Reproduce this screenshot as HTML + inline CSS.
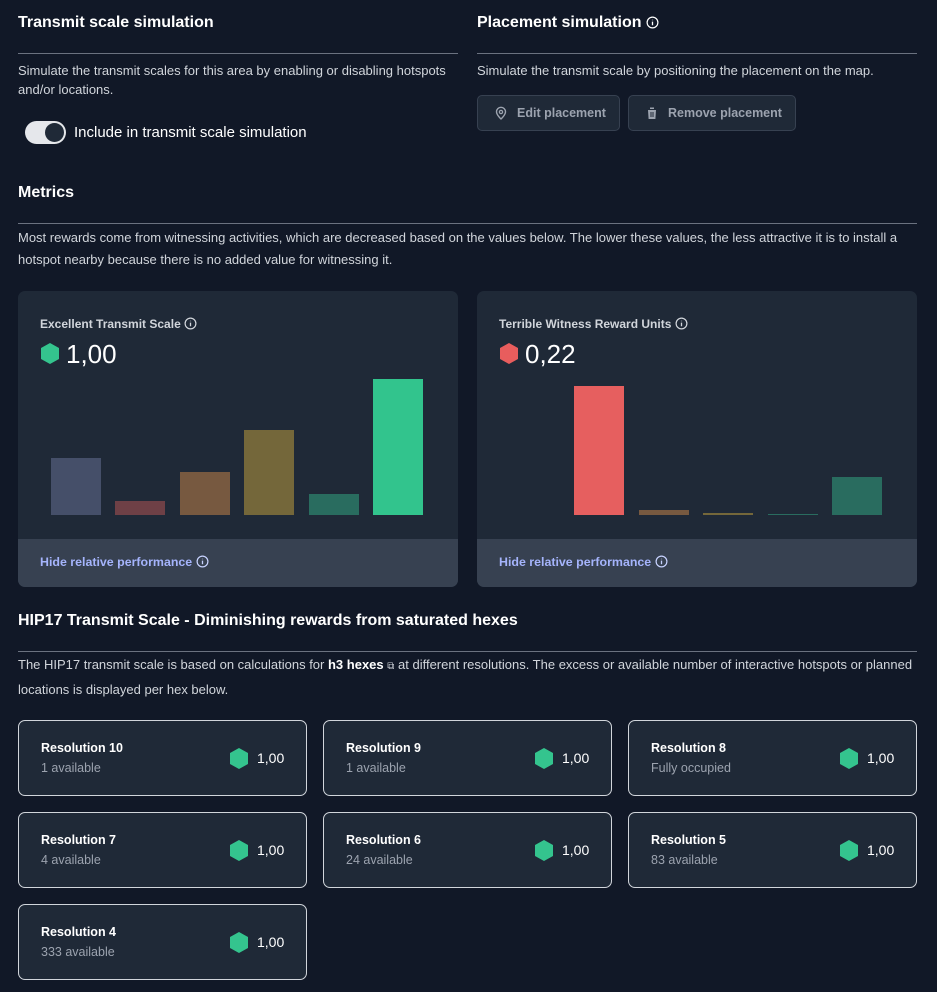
<!DOCTYPE html>
<html><head><meta charset="utf-8"><style>
*{box-sizing:border-box;margin:0;padding:0}
body{width:937px;height:992px;background:#111827;font-family:"Liberation Sans",sans-serif;color:#e5e7eb;position:relative;overflow:hidden}
.a{position:absolute}
h2{position:absolute;font-size:16px;font-weight:bold;color:#fff}
.hr{position:absolute;height:1px;background:#6b7280}
.p{position:absolute;font-size:13px;color:#d1d5db;line-height:19px}
.btn{position:absolute;height:36px;border:1px solid #374151;background:#1f2937;border-radius:5px;color:#9ca3af;font-size:12.5px;font-weight:bold;display:flex;align-items:center;padding-left:16px;gap:9px}
.card{position:absolute;background:#1f2937;border-radius:7px;overflow:hidden;width:440px;height:296px;top:291px}
.card .t{position:absolute;left:22px;top:26px;font-size:12px;font-weight:bold;color:#d1d5db}
.card .v{position:absolute;left:48px;top:48px;font-size:26px;color:#fff}
.card .f{position:absolute;left:0;top:248px;width:100%;height:48px;background:#374151}
.card .f span{position:absolute;left:22px;top:16px;font-size:12.4px;font-weight:bold;color:#a5b4fc}
.bar{position:absolute;width:50px;bottom:72px}
.rc{position:absolute;width:289px;height:76px;border:1px solid #d1d5db;border-radius:7px;background:#1f2937}
.rc b{position:absolute;left:22px;top:20px;font-size:12.5px;color:#fff}
.rc i{position:absolute;left:22px;top:40px;font-size:12.5px;color:#9ca3af;font-style:normal}
.rc svg{position:absolute;left:210px;top:27px}
.rc u{position:absolute;left:238px;top:29px;font-size:14px;text-decoration:none;color:#fff}
</style></head><body>
<h2 style="left:18px;top:14px">Transmit scale simulation</h2>
<div class="hr" style="left:18px;top:53px;width:440px"></div>
<div class="p" style="left:18px;top:61px;width:440px">Simulate the transmit scales for this area by enabling or disabling hotspots and/or locations.</div>
<div class="a" style="left:25px;top:121px;width:41px;height:23px;border-radius:12px;background:#e5e7eb"></div>
<div class="a" style="left:45px;top:123px;width:19px;height:19px;border-radius:50%;background:#1f2937"></div>
<div class="a" style="left:74px;top:124px;font-size:15px;color:#fff">Include in transmit scale simulation</div>

<h2 style="left:477px;top:14px">Placement simulation</h2>
<svg class="a" style="left:646px;top:16px" width="13" height="13" viewBox="0 0 14 14"><circle cx="7" cy="7" r="5.8" fill="none" stroke="#fff" stroke-width="1.3"/><path d="M7 6v4M7 4v.6" stroke="#fff" stroke-width="1.4"/></svg>
<div class="hr" style="left:477px;top:53px;width:440px"></div>
<div class="p" style="left:477px;top:61px">Simulate the transmit scale by positioning the placement on the map.</div>
<div class="btn" style="left:477px;top:95px;width:143px"><svg width="14" height="14" viewBox="0 0 14 14"><path d="M7 13s-4.5-4-4.5-7.2A4.5 4.5 0 0 1 11.5 5.8C11.5 9 7 13 7 13z" fill="none" stroke="#9ca3af" stroke-width="1.4"/><circle cx="7" cy="6" r="1.6" fill="none" stroke="#9ca3af" stroke-width="1.3"/></svg>Edit placement</div>
<div class="btn" style="left:628px;top:95px;width:168px"><svg width="14" height="14" viewBox="0 0 14 14"><path d="M2 3h10M5 3V1.5h4V3M3 4h8l-.6 9H3.6z" fill="#9ca3af"/><path d="M6 6v5M8 6v5" stroke="#1f2937" stroke-width="1"/></svg>Remove placement</div>

<h2 style="left:18px;top:184px">Metrics</h2>
<div class="hr" style="left:18px;top:223px;width:899px"></div>
<div class="p" style="left:18px;top:227px;width:899px;line-height:22px">Most rewards come from witnessing activities, which are decreased based on the values below. The lower these values, the less attractive it is to install a hotspot nearby because there is no added value for witnessing it.</div>

<div class="card" style="left:18px">
<div class="t">Excellent Transmit Scale <svg style="vertical-align:-2px" width="13" height="13" viewBox="0 0 14 14"><circle cx="7" cy="7" r="5.8" fill="none" stroke="#d1d5db" stroke-width="1.3"/><path d="M7 6v4M7 4v.6" stroke="#d1d5db" stroke-width="1.4"/></svg></div>
<svg class="a" style="left:22px;top:52px" width="20" height="22" viewBox="0 0 20 22"><path d="M10 0l9 5v11l-9 5-9-5V5z" fill="#34c48e"/></svg>
<div class="v">1,00</div>
<div class="bar" style="left:33px;height:57px;background:#454f69"></div>
<div class="bar" style="left:97px;height:14px;background:#6e4046"></div>
<div class="bar" style="left:162px;height:43px;background:#775940"></div>
<div class="bar" style="left:226px;height:85px;background:#74673a"></div>
<div class="bar" style="left:291px;height:21px;background:#296c5f"></div>
<div class="bar" style="left:355px;height:136px;background:#32c48d"></div>
<div class="f"><span>Hide relative performance <svg style="vertical-align:-2px" width="13" height="13" viewBox="0 0 14 14"><circle cx="7" cy="7" r="5.8" fill="none" stroke="#c7d2fe" stroke-width="1.3"/><path d="M7 6v4M7 4v.6" stroke="#c7d2fe" stroke-width="1.4"/></svg></span></div>
</div>
<div class="card" style="left:477px">
<div class="t">Terrible Witness Reward Units <svg style="vertical-align:-2px" width="13" height="13" viewBox="0 0 14 14"><circle cx="7" cy="7" r="5.8" fill="none" stroke="#d1d5db" stroke-width="1.3"/><path d="M7 6v4M7 4v.6" stroke="#d1d5db" stroke-width="1.4"/></svg></div>
<svg class="a" style="left:22px;top:52px" width="20" height="22" viewBox="0 0 20 22"><path d="M10 0l9 5v11l-9 5-9-5V5z" fill="#e85d5d"/></svg>
<div class="v">0,22</div>
<div class="bar" style="left:97px;height:129px;background:#e65f5f"></div>
<div class="bar" style="left:162px;height:5px;background:#775940"></div>
<div class="bar" style="left:226px;height:2px;background:#74673a"></div>
<div class="bar" style="left:291px;height:1px;background:#296c5f"></div>
<div class="bar" style="left:355px;height:38px;background:#296c5f"></div>
<div class="f"><span>Hide relative performance <svg style="vertical-align:-2px" width="13" height="13" viewBox="0 0 14 14"><circle cx="7" cy="7" r="5.8" fill="none" stroke="#c7d2fe" stroke-width="1.3"/><path d="M7 6v4M7 4v.6" stroke="#c7d2fe" stroke-width="1.4"/></svg></span></div>
</div>

<h2 style="left:18px;top:612px">HIP17 Transmit Scale - Diminishing rewards from saturated hexes</h2>
<div class="hr" style="left:18px;top:651px;width:899px"></div>
<div class="p" style="left:18px;top:653px;width:899px;line-height:23px">The HIP17 transmit scale is based on calculations for <b style="color:#fff">h3 hexes</b> <span style="font-size:10px">⧉</span> at different resolutions. The excess or available number of interactive hotspots or planned locations is displayed per hex below.</div>

<div class="rc" style="left:18px;top:720px"><b>Resolution 10</b><i>1 available</i><svg width="20" height="22" viewBox="0 0 20 22"><path d="M10 0l9 5v11l-9 5-9-5V5z" fill="#34c48e"/></svg><u>1,00</u></div>
<div class="rc" style="left:323px;top:720px"><b>Resolution 9</b><i>1 available</i><svg width="20" height="22" viewBox="0 0 20 22"><path d="M10 0l9 5v11l-9 5-9-5V5z" fill="#34c48e"/></svg><u>1,00</u></div>
<div class="rc" style="left:628px;top:720px"><b>Resolution 8</b><i>Fully occupied</i><svg width="20" height="22" viewBox="0 0 20 22"><path d="M10 0l9 5v11l-9 5-9-5V5z" fill="#34c48e"/></svg><u>1,00</u></div>
<div class="rc" style="left:18px;top:812px"><b>Resolution 7</b><i>4 available</i><svg width="20" height="22" viewBox="0 0 20 22"><path d="M10 0l9 5v11l-9 5-9-5V5z" fill="#34c48e"/></svg><u>1,00</u></div>
<div class="rc" style="left:323px;top:812px"><b>Resolution 6</b><i>24 available</i><svg width="20" height="22" viewBox="0 0 20 22"><path d="M10 0l9 5v11l-9 5-9-5V5z" fill="#34c48e"/></svg><u>1,00</u></div>
<div class="rc" style="left:628px;top:812px"><b>Resolution 5</b><i>83 available</i><svg width="20" height="22" viewBox="0 0 20 22"><path d="M10 0l9 5v11l-9 5-9-5V5z" fill="#34c48e"/></svg><u>1,00</u></div>
<div class="rc" style="left:18px;top:904px"><b>Resolution 4</b><i>333 available</i><svg width="20" height="22" viewBox="0 0 20 22"><path d="M10 0l9 5v11l-9 5-9-5V5z" fill="#34c48e"/></svg><u>1,00</u></div>
</body></html>
